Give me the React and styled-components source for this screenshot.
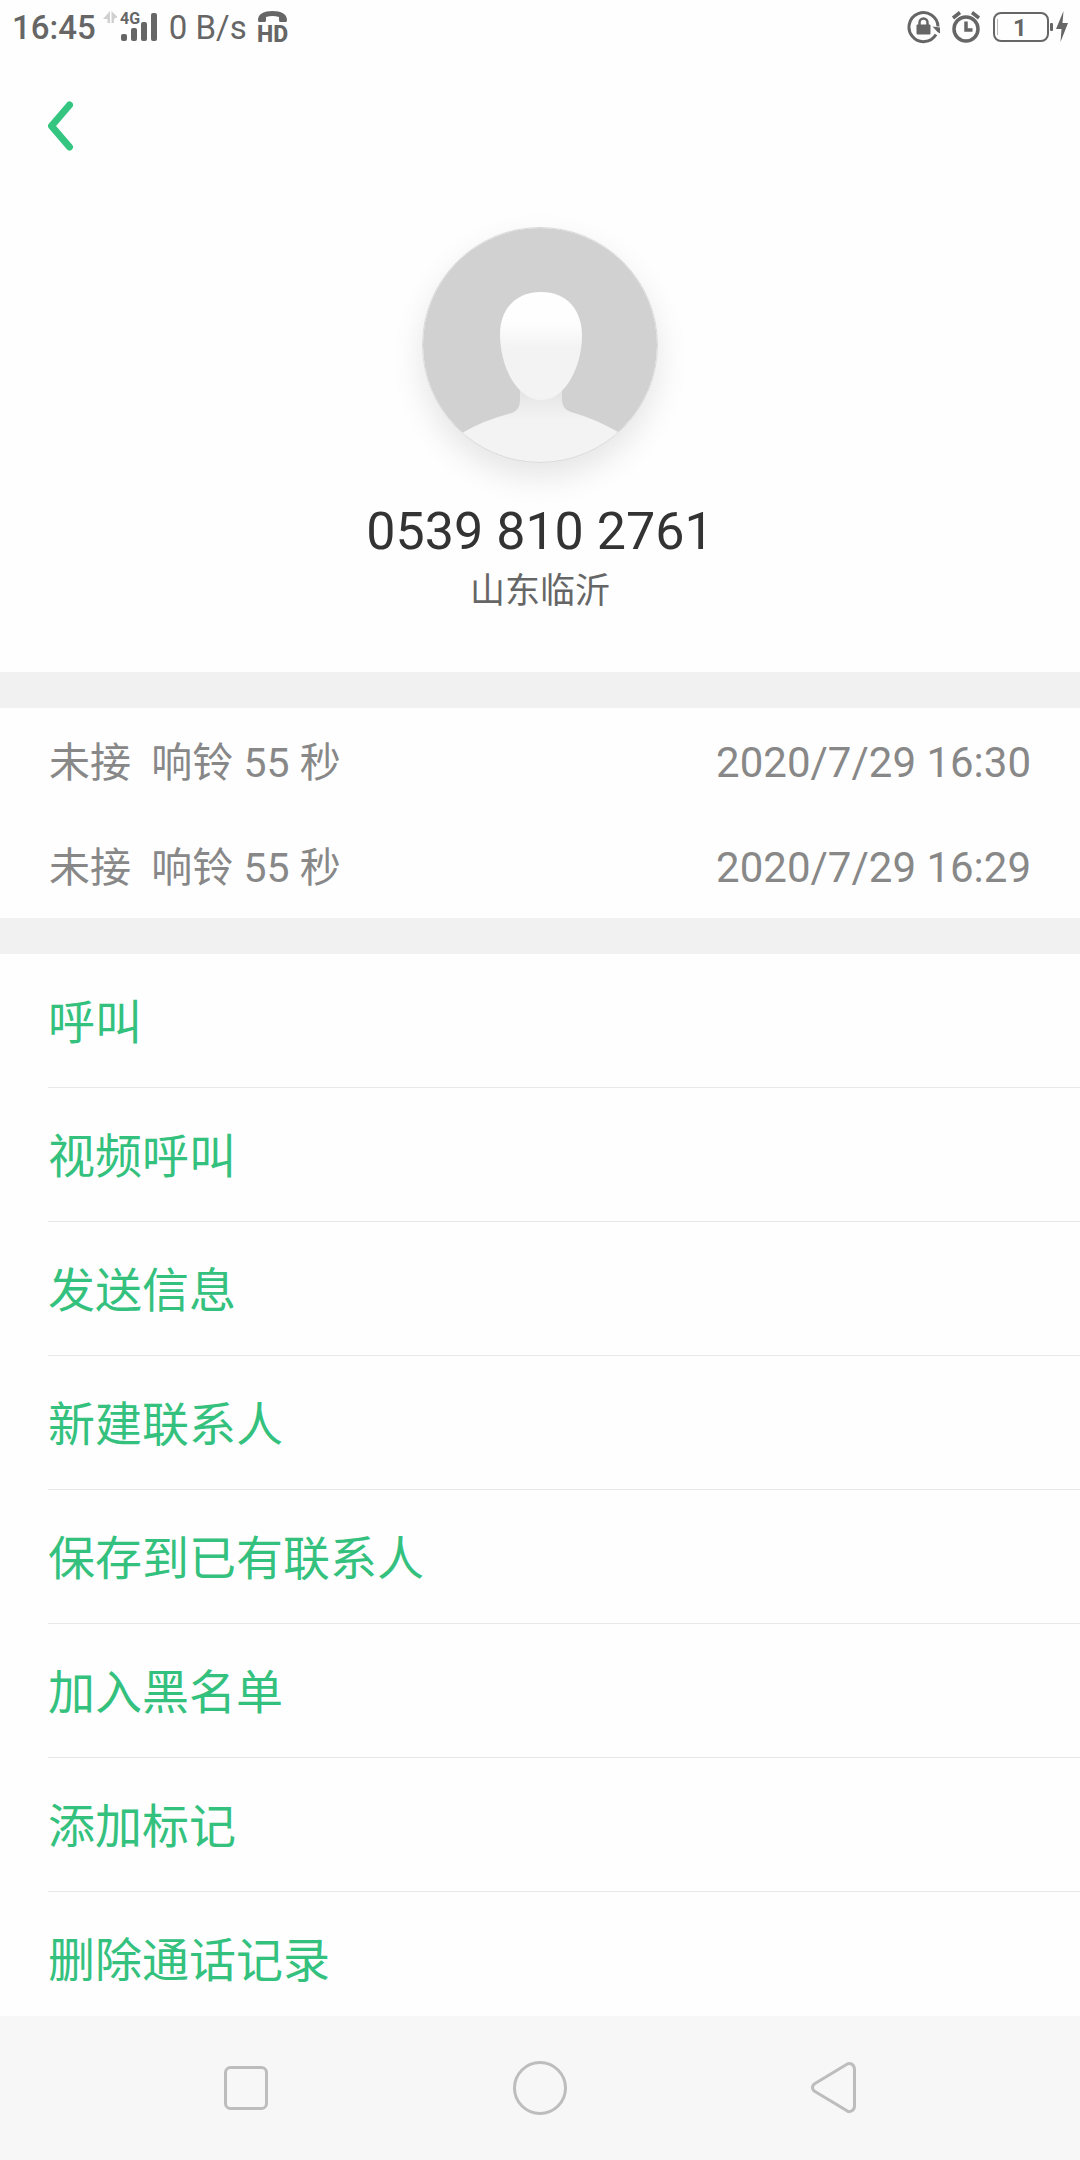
import styled, { createGlobalStyle } from 'styled-components';

const GlobalStyle = createGlobalStyle`
  * {
    box-sizing: border-box;
    margin: 0;
    padding: 0;
  }

  body {
    background-color: #fefefe;
    font-family: Roboto, 'Noto Sans CJK SC', sans-serif;
  }

  button {
    border: none;
    background: none;
    font-family: inherit;
    cursor: pointer;
  }

  svg {
    display: block;
  }
`;

const Screen = styled.div`
  display: flex;
  flex-direction: column;
  height: 100vh;
  overflow: hidden;
`;

const StatusBar = styled.header`
  display: flex;
  justify-content: space-between;
  align-items: center;
  flex-shrink: 0;
  height: 56px;
  padding: 0 12px;
  color: #666;
`;

const StatusGroup = styled.div`
  display: flex;
  align-items: center;
  gap: ${({ $gap }) => $gap};
`;

const StatusText = styled.span`
  font-size: 33px;
  line-height: 40px;
  font-weight: ${({ $bold }) => ($bold ? 500 : 400)};
`;

const Content = styled.main`
  flex: 1;
  min-height: 0;
  overflow-y: auto;
  scrollbar-width: none;
`;

const TopBar = styled.div`
  display: flex;
  align-items: center;
  height: 140px;
  padding: 0 48px;
`;

const BackButton = styled.button`
  &:hover {
    opacity: 0.7;
  }
`;

const Profile = styled.section`
  display: flex;
  flex-direction: column;
  align-items: center;
  padding: 31px 48px 52px;
`;

const Avatar = styled.div`
  width: 236px;
  height: 236px;
  margin-bottom: 37px;
  border-radius: 50%;
  box-shadow: 0 14px 32px rgba(0, 0, 0, 0.1);
`;

const PhoneNumber = styled.h1`
  color: #333;
  font-size: 52px;
  line-height: 64px;
  font-weight: 400;
`;

const Region = styled.p`
  color: #666;
  font-size: 35px;
  line-height: 56px;
`;

const CallLog = styled.ul`
  list-style: none;
  border-top: 36px solid #f1f1f1;
  border-bottom: 36px solid #f1f1f1;
`;

const CallRow = styled.li`
  display: flex;
  justify-content: space-between;
  align-items: center;
  height: 105px;
  padding: 4px 49px 0;
  color: #888;
  line-height: 60px;
`;

const CallDetail = styled.span`
  font-size: 41px;
  white-space: pre;
`;

const CallTime = styled.time`
  font-size: 42px;
`;

const ActionList = styled.ul`
  list-style: none;
  padding-left: 48px;
`;

const ActionItem = styled.li`
  border-bottom: 1px solid #e8e8e8;
`;

const ActionButton = styled.button`
  display: block;
  width: 100%;
  height: 133px;
  padding-top: 5px;
  color: #34c17e;
  font-size: 47px;
  line-height: 64px;
  text-align: left;

  &:hover {
    opacity: 0.7;
  }
`;

const NavBar = styled.nav`
  display: grid;
  grid-template-columns: repeat(3, 1fr);
  flex-shrink: 0;
  height: 144px;
  padding: 0 99px;
  background-color: #f7f7f7;
`;

const NavButton = styled.button`
  display: flex;
  justify-content: center;
  align-items: center;
`;

const calls = [
  { detail: '未接  响铃 55 秒', time: '2020/7/29 16:30' },
  { detail: '未接  响铃 55 秒', time: '2020/7/29 16:29' },
];

const actions = [
  '呼叫',
  '视频呼叫',
  '发送信息',
  '新建联系人',
  '保存到已有联系人',
  '加入黑名单',
  '添加标记',
  '删除通话记录',
];

const SignalIcon = () => (
  <svg width="59" height="44" viewBox="0 0 59 44" fill="#666">
    <path d="M7 5v12H4.500V13H0zM8.500 5v12H11V13l3.500-2z" fill="#d0d0d0" />
    <text x="17" y="18" fontSize="16" fontWeight="700">
      4G
    </text>
    <rect x="18" y="28" width="6" height="7" rx="2" />
    <rect x="28" y="22" width="6" height="13" rx="2" />
    <rect x="38" y="16" width="6" height="19" rx="2" />
    <rect x="48" y="7" width="6" height="28" rx="2" />
  </svg>
);

const HdCallIcon = () => (
  <svg width="36" height="40" viewBox="0 0 36 40" fill="#666">
    <path d="M4 12C4 6 10 3 18.500 3S33 6 33 12q0 2-1 2h-6q-1 0-1-2V9Q18.500 7 12 9v3q0 2-1 2H5q-1 0-1-2z" />
    <text
      x="18.500"
      y="34"
      fontSize="23"
      fontWeight="800"
      textAnchor="middle"
    >
      HD
    </text>
  </svg>
);

const RotationLockIcon = () => (
  <svg width="33" height="34" viewBox="0 0 33 34" fill="none" stroke="#666">
    <path d="M29 23.500A14.500 14.500 0 1 1 31 15.500" strokeWidth="3" />
    <path d="M25.500 15.500L33 16.500V22.500L30.500 21z" fill="#666" stroke="none" />
    <path d="M12.500 15v-3.500a4 4 0 0 1 8 0V15" strokeWidth="2.500" />
    <rect x="9.500" y="13.500" width="14" height="10" rx="1" fill="#666" stroke="none" />
  </svg>
);

const AlarmIcon = () => (
  <svg width="30" height="34" viewBox="0 0 30 34" fill="none" stroke="#666">
    <circle cx="15" cy="18" r="12" strokeWidth="3.500" />
    <path d="M15 10.500v8.500h6.500" strokeWidth="3.500" />
    <path d="M2 7L9 1.500M28 7L21 1.500" strokeWidth="3.500" />
  </svg>
);

const BatteryIcon = () => (
  <svg width="76" height="34" viewBox="0 0 76 34" fill="#666">
    <rect x="2" y="2" width="54" height="28" rx="7" fill="none" stroke="#666" strokeWidth="2" />
    <path d="M5.500 8v16" stroke="#bbb" />
    <text x="28" y="25" fontSize="24" fontWeight="700" textAnchor="middle">
      1
    </text>
    <rect x="58" y="12" width="3" height="8" rx="1" />
    <path d="M71.500 0L64 18h5.500l-1 13L76 12h-5.500z" />
  </svg>
);

const BackIcon = () => (
  <svg width="26" height="50" viewBox="0 0 26 50" fill="none">
    <path
      d="M21.500 4L3.500 25l18 21"
      stroke="#34c680"
      strokeWidth="7"
      strokeLinecap="round"
      strokeLinejoin="round"
    />
  </svg>
);

const AvatarIcon = () => (
  <svg width="236" height="236" viewBox="0 0 236 236">
    <defs>
      <clipPath id="avatarClip">
        <circle cx="118" cy="118" r="117" />
      </clipPath>
      <linearGradient id="headFill" x1="0" y1="0" x2="0" y2="1">
        <stop offset="0" stopColor="#fff" />
        <stop offset="0.300" stopColor="#fdfdfd" />
        <stop offset="0.520" stopColor="#f3f3f3" />
      </linearGradient>
      <linearGradient id="bodyFill" x1="0" y1="0" x2="0" y2="1">
        <stop offset="0" stopColor="#e2e2e2" />
        <stop offset="0.400" stopColor="#f3f3f3" />
      </linearGradient>
    </defs>
    <circle cx="118" cy="118" r="117" fill="#d1d1d1" />
    <g clipPath="url(#avatarClip)">
      <path
        d="M98 160V173Q98 183 90 186Q62 193 40 206V240H198V206Q174 192 149 185Q140 182 140 173V160z"
        fill="url(#bodyFill)"
      />
      <path
        d="M119 65C145 65 160 83 160 109C160 139 143 173 120 173C95 173 78 140 78 107C78 82 94 65 119 65z"
        fill="url(#headFill)"
      />
    </g>
    <circle cx="118" cy="118" r="117.500" fill="none" stroke="#dadada" strokeWidth="1" />
  </svg>
);

const RecentsIcon = () => (
  <svg width="44" height="44" viewBox="0 0 44 44" fill="none">
    <rect x="1.500" y="1.500" width="41" height="41" rx="5" stroke="#bdbdbd" strokeWidth="3" />
  </svg>
);

const HomeIcon = () => (
  <svg width="54" height="54" viewBox="0 0 54 54" fill="none">
    <circle cx="27" cy="27" r="25.500" stroke="#bdbdbd" strokeWidth="3" />
  </svg>
);

const NavBackIcon = () => (
  <svg width="46" height="54" viewBox="0 0 46 54" fill="none">
    <path
      d="M4 22.500L35.500 3.500Q38 2 40.500 3T43.500 8V45Q43.500 48.500 40.500 50T35.500 49.500L4 30.500Q1.500 29 1.500 26.500T4 22.500z"
      stroke="#bdbdbd"
      strokeWidth="3"
    />
  </svg>
);

const App = () => (
  <>
    <GlobalStyle />
    <Screen>
      <StatusBar>
        <StatusGroup $gap="7px">
          <StatusText $bold>16:45</StatusText>
          <SignalIcon />
          <StatusText>0 B/s</StatusText>
          <HdCallIcon />
        </StatusGroup>
        <StatusGroup $gap="11px">
          <RotationLockIcon />
          <AlarmIcon />
          <BatteryIcon />
        </StatusGroup>
      </StatusBar>

      <Content>
        <TopBar>
          <BackButton aria-label="返回">
            <BackIcon />
          </BackButton>
        </TopBar>

        <Profile>
          <Avatar>
            <AvatarIcon />
          </Avatar>
          <PhoneNumber>0539 810 2761</PhoneNumber>
          <Region>山东临沂</Region>
        </Profile>

        <CallLog>
          {calls.map(({ detail, time }) => (
            <CallRow key={time}>
              <CallDetail>{detail}</CallDetail>
              <CallTime>{time}</CallTime>
            </CallRow>
          ))}
        </CallLog>

        <ActionList>
          {actions.map((action) => (
            <ActionItem key={action}>
              <ActionButton>{action}</ActionButton>
            </ActionItem>
          ))}
        </ActionList>
      </Content>

      <NavBar>
        <NavButton aria-label="最近任务">
          <RecentsIcon />
        </NavButton>
        <NavButton aria-label="主屏幕">
          <HomeIcon />
        </NavButton>
        <NavButton aria-label="返回上一页">
          <NavBackIcon />
        </NavButton>
      </NavBar>
    </Screen>
  </>
);

export default App;
